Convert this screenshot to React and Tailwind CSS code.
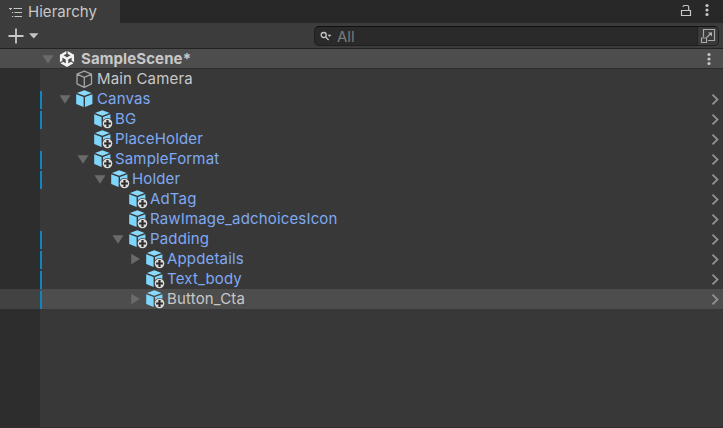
import React from "react";
import { SiUnity } from "react-icons/si";

const rows = [
  { name: "Canvas", depth: 0, arrow: "down", bar: true },
  { name: "BG", depth: 1, bar: true, added: true },
  { name: "PlaceHolder", depth: 1, added: true },
  { name: "SampleFormat", depth: 1, arrow: "down", bar: true, added: true },
  { name: "Holder", depth: 2, arrow: "down", bar: true, added: true },
  { name: "AdTag", depth: 3, added: true },
  { name: "RawImage_adchoicesIcon", depth: 3, added: true },
  { name: "Padding", depth: 3, arrow: "down", bar: true, added: true },
  { name: "Appdetails", depth: 4, arrow: "right", bar: true, added: true },
  { name: "Text_body", depth: 4, bar: true, added: true },
  { name: "Button_Cta", depth: 4, arrow: "right", bar: true, added: true, selected: true },
];

const indents = ["w-[17px]", "w-[35px]", "w-[52px]", "w-[70px]", "w-[87px]"];

function Fold({ dir }) {
  return (
    <svg className="h-5 w-[18px] shrink-0" viewBox="0 0 18 20" fill="#6a6a6a">
      {dir === "down" && <path d="M2.5 6.2h11L8 14.8z" />}
      {dir === "right" && <path d="M4.2 4.8v10.4L13 10z" />}
    </svg>
  );
}

function Cube({ added, selected }) {
  const bg = selected ? "#4d4d4d" : "#383838";
  return (
    <svg className="h-5 w-[22px] shrink-0" viewBox="0 0 22 20">
      <path d="M9.3 1.2 16.6 3.9 9.3 6.7 2 3.9z" fill="#8adafe" />
      <path d="M1.2 5.2 8.6 8.1v10L1.2 14.9z" fill="#7fd6fd" />
      <path d="M17.4 5.2 10 8.1v10l7.4-3.2z" fill="#7fd6fd" />
      {added && (
        <g>
          <circle cx="14.5" cy="14.5" r="5.5" fill={bg} />
          <circle cx="14.5" cy="14.5" r="4.8" fill="#dadada" />
          <path d="M14.5 11.1v6.8M11.1 14.5h6.8" stroke="#2c2c2c" strokeWidth="2.2" />
        </g>
      )}
    </svg>
  );
}

function Chevron() {
  return (
    <svg className="ml-auto mr-[2px] h-5 w-3 shrink-0" viewBox="0 0 12 20" fill="none" stroke="#929292" strokeWidth="1.8">
      <path d="M3.5 5.6 8.5 10.5 3.5 15.4" />
    </svg>
  );
}

function Dots() {
  return (
    <svg className="h-5 w-2 shrink-0" viewBox="0 0 8 20" fill="#c6c6c6">
      <circle cx="4" cy="5.5" r="1.6" />
      <circle cx="4" cy="10" r="1.6" />
      <circle cx="4" cy="14.5" r="1.6" />
    </svg>
  );
}

export default function App() {
  return (
    <div className="flex h-[428px] w-[723px] flex-col overflow-hidden bg-[#383838] font-['Inter',sans-serif] text-[15px] leading-5 tracking-[0.16px] text-[#c8c8c8]">
      <div className="flex h-[23px] shrink-0 bg-[#282828]">
        <div className="flex w-[120px] items-center bg-[#3c3c3c] pl-[9px]">
          <svg className="h-4 w-[14px] shrink-0" viewBox="0 0 14 16" fill="none" stroke="#c4c4c4" strokeWidth="1.1">
            <path d="M0 4.5h3M4.5 4.5H13M5.5 8.5H13M5.5 12.5H13M3 8.5h1.2M3 12.5h1.2" />
            <path d="M1.5 5v1" />
          </svg>
          <span className="ml-[5px] mt-px tracking-[0.04px]">Hierarchy</span>
        </div>
        <div className="ml-auto flex items-center pr-3">
          <svg className="mr-[11px] mb-[3px] h-5 w-3" viewBox="0 0 12 20" fill="none" stroke="#c6c6c6" strokeWidth="1.2">
            <path d="M1.5 10.5h9v5h-9zM3 6.9q0-1.4 1.4-1.4h2.7q1.6 0 1.6 1.6v3.4" />
          </svg>
          <div className="mb-[3px] flex"><Dots /></div>
        </div>
      </div>
      <div className="flex h-[26px] shrink-0 items-center border-b border-[#232323] bg-[#3c3c3c] pr-1 pl-2">
        <svg className="h-5 w-8" viewBox="0 0 32 20">
          <path d="M8 2.5v15M.5 10h15" stroke="#c8c8c8" strokeWidth="1.8" />
          <path d="M21 7.3h9.5L25.7 12.6z" fill="#c4c4c4" />
        </svg>
        <div className="ml-auto flex h-5 w-[405px] overflow-hidden rounded-[5px] border border-[#202020] border-t-[#101010] bg-[#2a2a2a]">
          <svg className="ml-[5px] h-[18px] w-3" viewBox="0 0 12 18" fill="none" stroke="#c4c4c4" strokeWidth="1.3">
            <circle cx="3.7" cy="8" r="2.5" />
            <path d="m5.6 10 3 3" />
            <path d="M7.5 7.8h4L9.5 10z" fill="#c4c4c4" stroke="none" />
          </svg>
          <span className="ml-[5px] leading-[19px] tracking-[0px] text-[#7a7a7a]">All</span>
          <div className="ml-auto flex w-[21px] justify-center border-l border-[#222] bg-[#3a3a3a]">
            <svg className="h-[18px] w-4" viewBox="0 0 16 18" fill="none" stroke="#a8a8a8" strokeWidth="1.2">
              <path d="M3.5 10V2.5h11v11H8M1.5 11h5v4.5h-5zM6.5 10.5l5-4.5" />
              <path d="M8 5.5h4v4z" fill="#b5b5b5" stroke="none" />
            </svg>
          </div>
        </div>
      </div>
      <div className="flex h-5 shrink-0 items-center border-b border-[#2c2c2c] bg-[#4d4d4d] pr-[10px] pl-10 font-bold">
        <Fold dir="down" />
        <SiUnity className="ml-px h-4 w-4 shrink-0 text-[#f2f2f2]" />
        <span className="ml-[6px] tracking-[0.1px]">SampleScene*</span>
        <div className="ml-auto flex"><Dots /></div>
      </div>
      <div className="flex h-5 shrink-0">
        <div className="w-10 bg-[#2d2d2d]" />
        <div className="flex flex-1 items-center pl-[35px]">
          <svg className="h-5 w-[22px]" viewBox="0 0 22 20" fill="none" stroke="#a4a4a4" strokeWidth="1.3" strokeLinejoin="round">
            <path d="M9.3 2.2 16.5 5.2v9.6l-7.2 3.5L2 14.8V5.2zM2 5.2l7.3 3.2 7.2-3.2M9.3 8.4v9.9" />
          </svg>
          <span>Main Camera</span>
        </div>
      </div>
      {rows.map((r) => (
        <div key={r.name} className={`flex h-5 shrink-0 ${r.selected ? "bg-[#4d4d4d]" : ""}`}>
          <div className={`w-10 shrink-0 ${r.selected ? "bg-[#424242]" : "bg-[#2d2d2d]"}`} />
          <div className={`mt-[2px] w-[2px] shrink-0 ${r.bar ? "bg-[#1583c1]" : ""}`} />
          <div className="-ml-[2px] flex flex-1 items-center">
            <span className={`shrink-0 ${indents[r.depth]}`} />
            <Fold dir={r.arrow} />
            <Cube added={r.added} selected={r.selected} />
            <span className={r.selected ? "text-[#c8c8c8]" : "text-[#7fa9f2]"}>{r.name}</span>
            <Chevron />
          </div>
        </div>
      ))}
      <div className="flex flex-1 border-b border-[#303030]">
        <div className="w-10 bg-[#2d2d2d]" />
      </div>
    </div>
  );
}
